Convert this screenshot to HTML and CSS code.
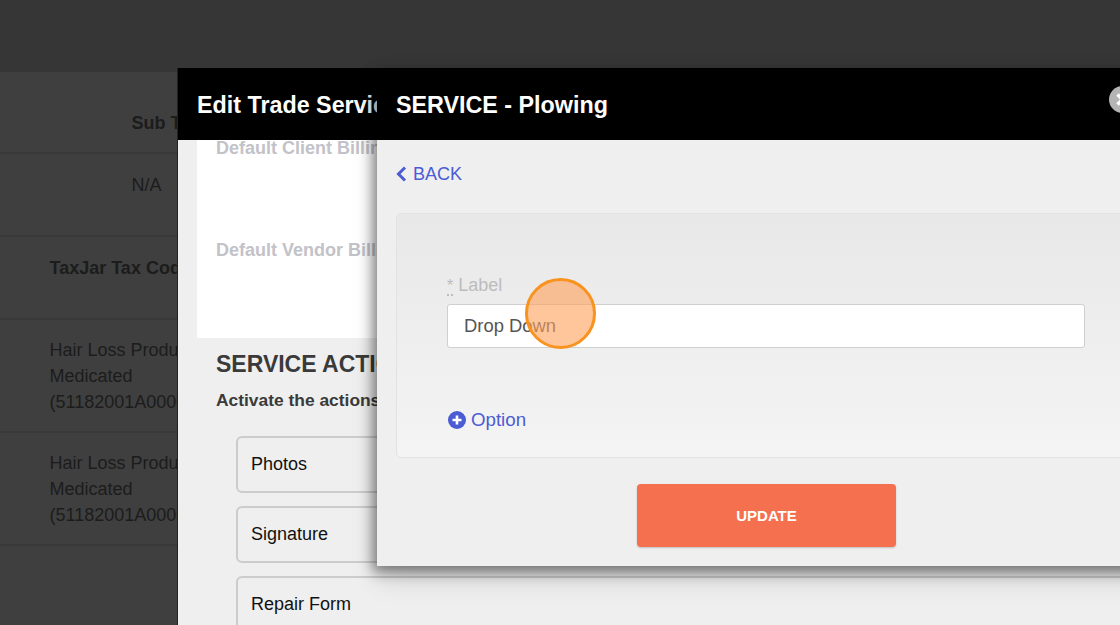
FILE: index.html
```html
<!DOCTYPE html>
<html lang="en">
  <head>
    <meta charset="UTF-8" />
    <title>Edit Trade Service</title>
    <link rel="stylesheet" href="styles.css">
  </head>
  <body>
    <div class="topbar"></div>

    <!-- Page behind the dialogs -->
    <div class="table">
      <div class="row row-head"><b>Sub Total</b></div>
      <div class="row row-value">N/A</div>
      <div class="row row-tax"><b>TaxJar Tax Code</b></div>
      <div class="row row-code">Hair Loss Products<br />Medicated<br />(51182001A0000)</div>
      <div class="row row-code">Hair Loss Products<br />Medicated<br />(51182001A0000)</div>
    </div>

    <!-- Edit Trade Service dialog -->
    <div class="modal modal-back">
      <div class="modal-header">Edit Trade Service</div>
      <div class="billing">
        <div class="billing-label first">Default Client Billing</div>
        <div class="billing-label">Default Vendor Billing</div>
      </div>
      <h2>SERVICE ACTIONS</h2>
      <p class="hint">Activate the actions for this service</p>
      <div class="action">Photos</div>
      <div class="action">Signature</div>
      <div class="action">Repair Form</div>
    </div>

    <!-- Service dialog -->
    <div class="modal modal-front">
      <div class="modal-header">
        SERVICE - Plowing
        <span class="close">
          <svg width="27" height="27" viewBox="0 0 27 27">
            <circle cx="13.5" cy="13.5" r="13.5" fill="#b4b4b4" />
            <path d="M8.5 8.5l10 10M18.5 8.5l-10 10" stroke="#fff" stroke-width="3.5" />
          </svg>
        </span>
      </div>
      <div class="modal-body">
        <a class="back" href="#">
          <svg width="11" height="16" viewBox="0 0 11 16">
            <path d="M9 1.5L2.5 8L9 14.5" fill="none" stroke="#4a5bd4" stroke-width="3" />
          </svg>
          BACK
        </a>
        <div class="panel">
          <label class="field-label"><span class="req">*</span> Label</label>
          <input class="field-input" type="text" value="Drop Down" />
          <a class="option" href="#">
            <svg width="18" height="18" viewBox="0 0 18 18">
              <circle cx="9" cy="9" r="9" fill="#4a5bd4" />
              <path d="M9 4.5v9M4.5 9h9" stroke="#fff" stroke-width="2.6" />
            </svg>
            Option
          </a>
        </div>
        <div class="actions">
          <button class="update" type="button">UPDATE</button>
        </div>
      </div>
    </div>

    <div class="cursor"></div>
  </body>
</html>
```

FILE: styles.css
```css
html,
body {
  height: 100%;
}
body {
  margin: 0;
  overflow: hidden;
  font-family: "Liberation Sans", Arial, sans-serif;
  background-color: #3f3f3f;
  color: #1c1c1c;
}
.topbar {
  height: 72px;
  background-color: #363636;
}
.table {
  font-size: 18px;
  line-height: 26px;
}
.row {
  box-sizing: border-box;
  border-bottom: 2px solid #393939;
  padding-left: 49.5px;
}
.row-head {
  height: 82px;
  padding: 38px 0 0 131.5px;
}
.row-value {
  height: 83px;
  padding: 18px 0 0 131.5px;
}
.row-tax {
  height: 83px;
  padding-top: 18px;
}
.row-code {
  height: 113px;
  padding-top: 17px;
}
.modal {
  position: absolute;
  top: 68px;
  background-color: #efefef;
  overflow: hidden;
}
.modal-header {
  box-sizing: border-box;
  height: 72px;
  padding: 24px 19px 0;
  background-color: #000;
  color: #fff;
  font-size: 23.3px;
  font-weight: bold;
  line-height: 27px;
  white-space: nowrap;
}
.modal-back {
  left: 177px;
  right: 0;
  bottom: 0;
  border-left: 1px solid #222;
}
.billing {
  height: 198px;
  margin-left: 19px;
  background-color: #fff;
  padding-left: 19px;
  overflow: hidden;
}
.billing-label {
  margin-top: 82px;
  color: #c2c2c8;
  font-size: 18px;
  font-weight: bold;
  line-height: 20px;
  white-space: nowrap;
}
.billing-label.first {
  margin-top: -2px;
}
.modal-back h2 {
  margin: 12px 0 0 38px;
  color: #3a3a3a;
  font-size: 23px;
  line-height: 28px;
  white-space: nowrap;
}
.hint {
  margin: 12px 0 26px 38px;
  color: #3a3a3a;
  font-size: 17.4px;
  font-weight: bold;
  line-height: 20px;
  white-space: nowrap;
}
.action {
  box-sizing: border-box;
  width: 1000px;
  height: 57px;
  margin: 0 0 13px 58px;
  padding: 14px 13px;
  border: 2px solid #cccccc;
  border-radius: 6px;
  color: #111;
  font-size: 18px;
  line-height: 24px;
}
.modal-front {
  left: 377px;
  width: 800px;
  height: 498px;
  box-shadow: -4px 6px 12px rgba(0, 0, 0, 0.45), 0 12px 26px rgba(0, 0, 0, 0.15);
}
.close {
  position: absolute;
  left: 732px;
  top: 18px;
  line-height: 0;
}
.modal-body {
  padding: 22px 19px 0;
}
.back {
  display: flex;
  align-items: center;
  gap: 6px;
  height: 24px;
  color: #4a5bd4;
  font-size: 18px;
  line-height: 24px;
  text-decoration: none;
}
.panel {
  box-sizing: border-box;
  width: 760px;
  height: 245px;
  margin-top: 27px;
  padding: 61px 0 0 50px;
  border: 1px solid #e2e2e2;
  border-radius: 5px;
  background: linear-gradient(#e8e8e8, #f4f4f4);
}
.field-label {
  display: block;
  color: #bcbcbc;
  font-size: 18px;
  line-height: 20px;
}
.req {
  border-bottom: 2px dotted #bcbcbc;
  font-size: 16px;
}
.field-input {
  display: block;
  box-sizing: border-box;
  width: 638px;
  height: 44px;
  margin-top: 8px;
  padding: 0 16px;
  border: 1px solid #cfcfcf;
  border-radius: 3px;
  background-color: #fff;
  color: #555;
  font-family: inherit;
  font-size: 18.4px;
}
.option {
  display: flex;
  align-items: center;
  gap: 5px;
  margin: 60px 0 0 1px;
  color: #4a5bd4;
  font-size: 18.7px;
  line-height: 24px;
  text-decoration: none;
}
.actions {
  padding: 26px 0 0 241px;
}
.update {
  width: 259px;
  height: 63px;
  border: none;
  border-radius: 4px;
  background-color: #f5704f;
  box-shadow: 0 1px 2px rgba(0, 0, 0, 0.2);
  color: #fff;
  font-family: inherit;
  font-size: 15px;
  font-weight: bold;
}
.cursor {
  position: absolute;
  left: 525px;
  top: 278px;
  box-sizing: border-box;
  width: 71px;
  height: 71px;
  border: 3px solid #f7931e;
  border-radius: 50%;
  background-color: rgba(255, 160, 90, 0.6);
}
```
